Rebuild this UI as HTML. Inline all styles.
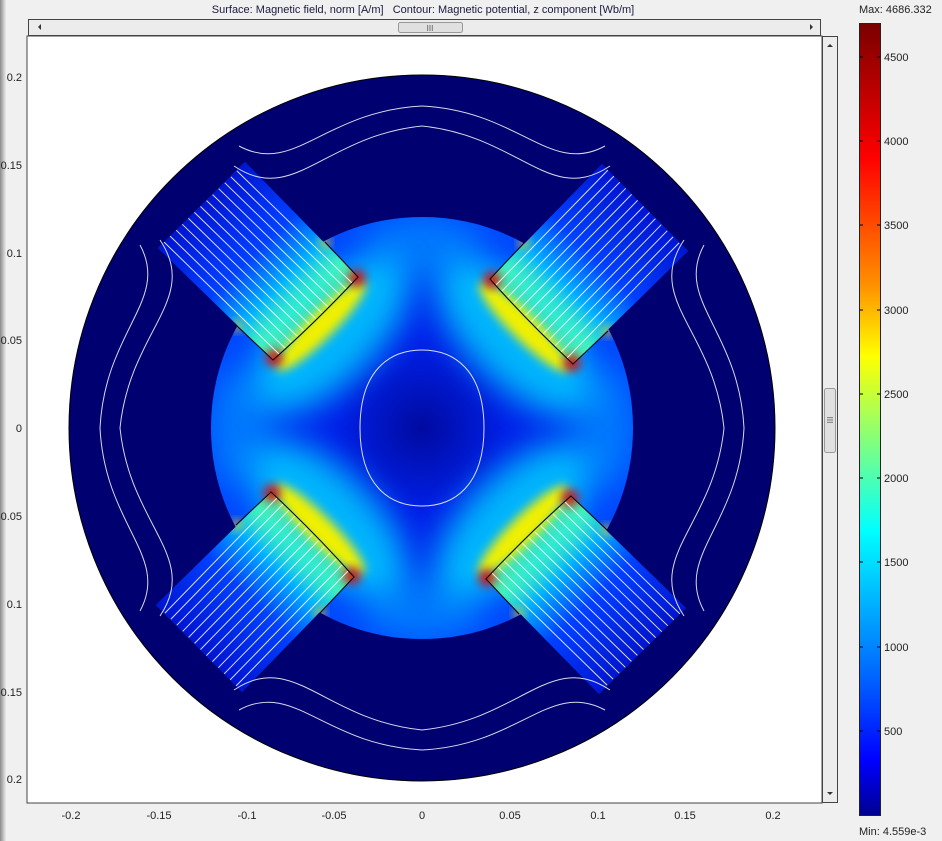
<!DOCTYPE html>
<html><head><meta charset="utf-8"><style>
html,body{margin:0;padding:0;width:942px;height:841px;overflow:hidden;background:#f0f0f0;font-family:"Liberation Sans",sans-serif;}
</style></head><body>
<svg width="942" height="841" viewBox="0 0 942 841" xmlns="http://www.w3.org/2000/svg" style="position:absolute;left:0;top:0">
<defs>
<linearGradient id="edge" x1="0" x2="1" y1="0" y2="0"><stop offset="0" stop-color="#8a8a8a"/><stop offset="1" stop-color="#ececec"/></linearGradient>
<linearGradient id="jet" x1="0" y1="0" x2="0" y2="1">
<stop offset="0" stop-color="#7a0000"/><stop offset="0.17" stop-color="#ff0000"/><stop offset="0.33" stop-color="#ff9000"/><stop offset="0.42" stop-color="#ffff00"/><stop offset="0.64" stop-color="#00ffff"/><stop offset="0.83" stop-color="#0060ff"/><stop offset="0.93" stop-color="#0000ff"/><stop offset="1" stop-color="#000090"/></linearGradient>
<radialGradient id="rotor" cx="422" cy="428" r="211" gradientUnits="userSpaceOnUse"><stop offset="0" stop-color="#000aa0"/><stop offset="0.4" stop-color="#0020e8"/><stop offset="1" stop-color="#0048ff"/></radialGradient>
<linearGradient id="mag" gradientUnits="userSpaceOnUse" x1="315" y1="318" x2="201" y2="205">
<stop offset="0" stop-color="#e8f000"/><stop offset="0.12" stop-color="#60ffa0"/><stop offset="0.3" stop-color="#00b0ff"/><stop offset="0.55" stop-color="#0040ff"/><stop offset="1" stop-color="#0014d0"/></linearGradient>
<filter id="b1" x="-50%" y="-50%" width="200%" height="200%"><feGaussianBlur stdDeviation="16"/></filter>
<filter id="b2" x="-50%" y="-50%" width="200%" height="200%"><feGaussianBlur stdDeviation="5"/></filter>
<clipPath id="cshape">
<circle cx="422" cy="428" r="211"/>
<polygon points="273,360 358,277 245,162 158,248"/>
<polygon points="273,360 358,277 245,162 158,248" transform="rotate(90 422 428)"/>
<polygon points="273,360 358,277 245,162 158,248" transform="rotate(180 422 428)"/>
<polygon points="273,360 358,277 245,162 158,248" transform="rotate(270 422 428)"/>
</clipPath>
</defs>
<rect x="0" y="0" width="6" height="841" fill="url(#edge)"/>
<text x="423" y="13" font-size="11" fill="#1a1a40" text-anchor="middle">Surface: Magnetic field, norm [A/m]&#160;&#160; Contour: Magnetic potential, z component [Wb/m]</text>
<rect x="28.5" y="19.5" width="792" height="16" fill="#ececec" stroke="#444"/>
<rect x="398.5" y="22.5" width="64" height="10" rx="2" fill="#e0e0e0" stroke="#999"/>
<text x="430" y="31" font-size="8" text-anchor="middle" fill="#555">III</text>
<polygon points="38,27 41,24 41,30" fill="#333"/><polygon points="813,27 810,24 810,30" fill="#333"/>
<rect x="27" y="36" width="795" height="767" fill="#fff" stroke="#444"/>
<rect x="822.5" y="36.5" width="15" height="766" fill="#ececec" stroke="#444"/>
<rect x="824.5" y="388.5" width="11" height="64" rx="2" fill="#e0e0e0" stroke="#999"/>
<text x="830" y="423" font-size="8" text-anchor="middle" fill="#555" transform="rotate(90 830 420)">III</text>
<polygon points="830,44 827,47 833,47" fill="#333"/><polygon points="830,795 827,792 833,792" fill="#333"/>
<circle cx="422" cy="428" r="353" fill="#000070"/>
<g clip-path="url(#cshape)">
<rect x="0" y="0" width="842" height="841" fill="url(#rotor)"/>
<ellipse cx="240" cy="428" rx="30" ry="60" fill="#00a0ff" filter="url(#b1)" opacity="0.6"/>
<ellipse cx="604" cy="428" rx="30" ry="60" fill="#00a0ff" filter="url(#b1)" opacity="0.6"/>
<ellipse cx="422" cy="246" rx="60" ry="30" fill="#00a0ff" filter="url(#b1)" opacity="0.6"/>
<ellipse cx="422" cy="610" rx="60" ry="30" fill="#00a0ff" filter="url(#b1)" opacity="0.6"/>
<g>
<polygon points="273,360 358,277 245,162 158,248" fill="url(#mag)"/>
<ellipse cx="330" cy="334" rx="100" ry="48" fill="#00d8ff" transform="rotate(-45 330 334)" filter="url(#b1)" opacity="0.8"/>
<ellipse cx="321" cy="326" rx="62" ry="13" fill="#f0f000" transform="rotate(-45 321 326)" filter="url(#b2)"/>
<circle cx="274" cy="358" r="8" fill="#e00000" filter="url(#b2)"/>
<circle cx="357" cy="278" r="8" fill="#e00000" filter="url(#b2)"/>
<circle cx="325" cy="242" r="5" fill="#ffd000" filter="url(#b2)"/>
<circle cx="237" cy="326" r="5" fill="#ffd000" filter="url(#b2)"/>
<path fill="none" stroke="#fff" stroke-width="1" opacity="0.85" d="M279.1,354.1L164.1,242.1M285.1,348.1L170.1,236.1M291.2,342.2L176.2,230.2M297.3,336.3L182.3,224.3M303.4,330.4L188.4,218.4M309.4,324.4L194.4,212.4M315.5,318.5L200.5,206.5M321.6,312.6L206.6,200.6M327.6,306.6L212.6,194.6M333.7,300.7L218.7,188.7M339.8,294.8L224.8,182.8M345.9,288.9L230.9,176.9M351.9,282.9L236.9,170.9"/>
</g>
<g transform="rotate(90 422 428)">
<polygon points="273,360 358,277 245,162 158,248" fill="url(#mag)"/>
<ellipse cx="330" cy="334" rx="100" ry="48" fill="#00d8ff" transform="rotate(-45 330 334)" filter="url(#b1)" opacity="0.8"/>
<ellipse cx="321" cy="326" rx="62" ry="13" fill="#f0f000" transform="rotate(-45 321 326)" filter="url(#b2)"/>
<circle cx="274" cy="358" r="8" fill="#e00000" filter="url(#b2)"/>
<circle cx="357" cy="278" r="8" fill="#e00000" filter="url(#b2)"/>
<circle cx="325" cy="242" r="5" fill="#ffd000" filter="url(#b2)"/>
<circle cx="237" cy="326" r="5" fill="#ffd000" filter="url(#b2)"/>
<path fill="none" stroke="#fff" stroke-width="1" opacity="0.85" d="M279.1,354.1L164.1,242.1M285.1,348.1L170.1,236.1M291.2,342.2L176.2,230.2M297.3,336.3L182.3,224.3M303.4,330.4L188.4,218.4M309.4,324.4L194.4,212.4M315.5,318.5L200.5,206.5M321.6,312.6L206.6,200.6M327.6,306.6L212.6,194.6M333.7,300.7L218.7,188.7M339.8,294.8L224.8,182.8M345.9,288.9L230.9,176.9M351.9,282.9L236.9,170.9"/>
</g>
<g transform="rotate(180 422 428)">
<polygon points="273,360 358,277 245,162 158,248" fill="url(#mag)"/>
<ellipse cx="330" cy="334" rx="100" ry="48" fill="#00d8ff" transform="rotate(-45 330 334)" filter="url(#b1)" opacity="0.8"/>
<ellipse cx="321" cy="326" rx="62" ry="13" fill="#f0f000" transform="rotate(-45 321 326)" filter="url(#b2)"/>
<circle cx="274" cy="358" r="8" fill="#e00000" filter="url(#b2)"/>
<circle cx="357" cy="278" r="8" fill="#e00000" filter="url(#b2)"/>
<circle cx="325" cy="242" r="5" fill="#ffd000" filter="url(#b2)"/>
<circle cx="237" cy="326" r="5" fill="#ffd000" filter="url(#b2)"/>
<path fill="none" stroke="#fff" stroke-width="1" opacity="0.85" d="M279.1,354.1L164.1,242.1M285.1,348.1L170.1,236.1M291.2,342.2L176.2,230.2M297.3,336.3L182.3,224.3M303.4,330.4L188.4,218.4M309.4,324.4L194.4,212.4M315.5,318.5L200.5,206.5M321.6,312.6L206.6,200.6M327.6,306.6L212.6,194.6M333.7,300.7L218.7,188.7M339.8,294.8L224.8,182.8M345.9,288.9L230.9,176.9M351.9,282.9L236.9,170.9"/>
</g>
<g transform="rotate(270 422 428)">
<polygon points="273,360 358,277 245,162 158,248" fill="url(#mag)"/>
<ellipse cx="330" cy="334" rx="100" ry="48" fill="#00d8ff" transform="rotate(-45 330 334)" filter="url(#b1)" opacity="0.8"/>
<ellipse cx="321" cy="326" rx="62" ry="13" fill="#f0f000" transform="rotate(-45 321 326)" filter="url(#b2)"/>
<circle cx="274" cy="358" r="8" fill="#e00000" filter="url(#b2)"/>
<circle cx="357" cy="278" r="8" fill="#e00000" filter="url(#b2)"/>
<circle cx="325" cy="242" r="5" fill="#ffd000" filter="url(#b2)"/>
<circle cx="237" cy="326" r="5" fill="#ffd000" filter="url(#b2)"/>
<path fill="none" stroke="#fff" stroke-width="1" opacity="0.85" d="M279.1,354.1L164.1,242.1M285.1,348.1L170.1,236.1M291.2,342.2L176.2,230.2M297.3,336.3L182.3,224.3M303.4,330.4L188.4,218.4M309.4,324.4L194.4,212.4M315.5,318.5L200.5,206.5M321.6,312.6L206.6,200.6M327.6,306.6L212.6,194.6M333.7,300.7L218.7,188.7M339.8,294.8L224.8,182.8M345.9,288.9L230.9,176.9M351.9,282.9L236.9,170.9"/>
</g>
</g>
<g fill="none" stroke="#000" stroke-width="1">
<circle cx="422" cy="428" r="353"/>
<path d="M237,326 L273,360 Q315,323 358,277 L325,242"/>
<path d="M237,326 L273,360 Q315,323 358,277 L325,242" transform="rotate(90 422 428)"/>
<path d="M237,326 L273,360 Q315,323 358,277 L325,242" transform="rotate(180 422 428)"/>
<path d="M237,326 L273,360 Q315,323 358,277 L325,242" transform="rotate(270 422 428)"/>
</g>
<g fill="none" stroke="#fff" stroke-width="1" opacity="0.85">
<path d="M120,428 C130,330 200,300 160,240"/><path d="M724,428 C714,330 644,300 684,240"/>
<path d="M120,428 C130,526 200,556 160,616"/><path d="M724,428 C714,526 644,556 684,616"/>
<path d="M100,428 C105,330 170,300 140,245"/><path d="M744,428 C739,330 674,300 704,245"/>
<path d="M100,428 C105,526 170,556 140,611"/><path d="M744,428 C739,526 674,556 704,611"/>
<path d="M422,126 C324,136 294,206 234,166"/><path d="M422,126 C520,136 550,206 610,166"/>
<path d="M422,730 C324,720 294,650 234,690"/><path d="M422,730 C520,720 550,650 610,690"/>
<path d="M422,106 C324,111 294,176 239,146"/><path d="M422,106 C520,111 550,176 605,146"/>
<path d="M422,750 C324,745 294,680 239,710"/><path d="M422,750 C520,745 550,680 605,710"/>
<path d="M360,428 C360,370 390,350 422,350 C454,350 484,370 484,428 C484,486 454,506 422,506 C390,506 360,486 360,428"/>
</g>
<g font-size="11" fill="#222" text-anchor="end">
<text x="22" y="81">0.2</text><text x="22" y="169">0.15</text><text x="22" y="257">0.1</text><text x="22" y="344">0.05</text><text x="22" y="432">0</text><text x="22" y="520">0.05</text><text x="22" y="608">0.1</text><text x="22" y="696">0.15</text><text x="22" y="783">0.2</text>
</g>
<g font-size="11" fill="#222" text-anchor="middle">
<text x="71" y="819">-0.2</text><text x="159" y="819">-0.15</text><text x="247" y="819">-0.1</text><text x="334" y="819">-0.05</text><text x="422" y="819">0</text><text x="510" y="819">0.05</text><text x="598" y="819">0.1</text><text x="685" y="819">0.15</text><text x="773" y="819">0.2</text>
</g>
<text x="859" y="13" font-size="11" fill="#222">Max: 4686.332</text>
<rect x="859.5" y="23.5" width="21" height="792" fill="url(#jet)" stroke="#222"/>
<g stroke="#000"><line x1="860" y1="57" x2="863" y2="57"/><line x1="877" y1="57" x2="880" y2="57"/><line x1="860" y1="141" x2="863" y2="141"/><line x1="877" y1="141" x2="880" y2="141"/><line x1="860" y1="225" x2="863" y2="225"/><line x1="877" y1="225" x2="880" y2="225"/><line x1="860" y1="310" x2="863" y2="310"/><line x1="877" y1="310" x2="880" y2="310"/><line x1="860" y1="394" x2="863" y2="394"/><line x1="877" y1="394" x2="880" y2="394"/><line x1="860" y1="478" x2="863" y2="478"/><line x1="877" y1="478" x2="880" y2="478"/><line x1="860" y1="562" x2="863" y2="562"/><line x1="877" y1="562" x2="880" y2="562"/><line x1="860" y1="647" x2="863" y2="647"/><line x1="877" y1="647" x2="880" y2="647"/><line x1="860" y1="731" x2="863" y2="731"/><line x1="877" y1="731" x2="880" y2="731"/></g>
<g font-size="11" fill="#222">
<text x="884" y="61">4500</text><text x="884" y="145">4000</text><text x="884" y="229">3500</text><text x="884" y="314">3000</text><text x="884" y="398">2500</text><text x="884" y="482">2000</text><text x="884" y="566">1500</text><text x="884" y="651">1000</text><text x="884" y="735">500</text>
</g>
<text x="859" y="835" font-size="11" fill="#222">Min: 4.559e-3</text>
</svg>
</body></html>
